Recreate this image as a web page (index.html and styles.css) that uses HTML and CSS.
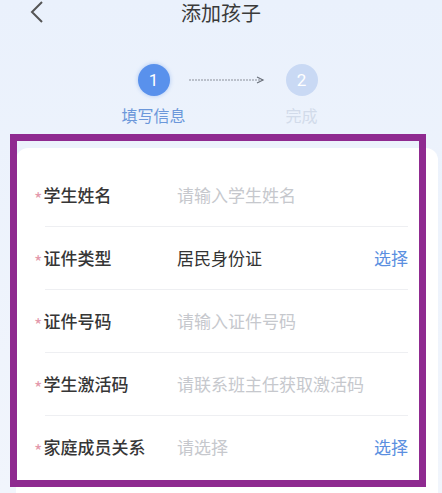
FILE: index.html
```html
<!DOCTYPE html>
<html lang="zh-CN">
<head>
    <meta charset="UTF-8">
    <meta name="viewport" content="width=device-width, initial-scale=1.0">
    <title>添加孩子</title>
    <link rel="stylesheet" href="styles.css">
</head>
<body>
    <div class="header">
        <span class="back">
            <svg width="14" height="22" viewBox="0 0 14 22"><polyline points="12,1 2,11 12,21" fill="none" stroke="#555" stroke-width="2"/></svg>
        </span>
        <span class="title">添加孩子</span>
    </div>

    <div class="steps">
        <div class="step active">
            <div class="dot">1</div>
            <div class="step-label">填写信息</div>
        </div>
        <svg class="arrow" width="76" height="10" viewBox="0 0 76 10">
            <line x1="0" y1="5" x2="74" y2="5" stroke="#8a8f99" stroke-width="1" stroke-dasharray="2,1"/>
            <polyline points="68,2 74,5 68,8" fill="none" stroke="#6b717c" stroke-width="1.2"/>
        </svg>
        <div class="step">
            <div class="dot">2</div>
            <div class="step-label">完成</div>
        </div>
    </div>

    <div class="card">
        <div class="row">
            <span class="label"><i class="star">*</i>学生姓名</span>
            <span class="value placeholder">请输入学生姓名</span>
        </div>
        <div class="row">
            <span class="label"><i class="star">*</i>证件类型</span>
            <span class="value">居民身份证</span>
            <span class="pick">选择</span>
        </div>
        <div class="row">
            <span class="label"><i class="star">*</i>证件号码</span>
            <span class="value placeholder">请输入证件号码</span>
        </div>
        <div class="row">
            <span class="label"><i class="star">*</i>学生激活码</span>
            <span class="value placeholder">请联系班主任获取激活码</span>
        </div>
        <div class="row">
            <span class="label"><i class="star">*</i>家庭成员关系</span>
            <span class="value placeholder">请选择</span>
            <span class="pick">选择</span>
        </div>
    </div>

    <div class="highlight"></div>
</body>
</html>
```

FILE: styles.css
```css
body { margin: 0; height: 493px; overflow: hidden; position: relative; background: linear-gradient(#eaf1fc, #f1f5fc); font-family: "Noto Sans CJK SC", "Noto Sans", sans-serif; color: #333; }

.header { height: 25px; position: relative; display: flex; justify-content: center; align-items: center; }
.header .back { position: absolute; left: 30px; top: 1px; }
.header .title { font-size: 20px; line-height: 24px; padding-top: 1px; color: #3a3a3a; }

.steps { display: flex; justify-content: center; align-items: flex-start; margin-top: 39px; padding-left: 13px; }
.step { width: 32px; display: flex; flex-direction: column; align-items: center; }
.dot { width: 32px; height: 32px; border-radius: 50%; background: #c9d9f4; color: #fff; font-size: 17px; line-height: 32px; text-align: center; font-family: Roboto, sans-serif; }
.step.active .dot { background: #5991ec; box-shadow: 0 0 4px rgba(89, 145, 236, .45); }
.step-label { margin-top: 9px; font-size: 16px; line-height: 20px; color: #d2dbea; white-space: nowrap; }
.step.active .step-label { color: #6b97da; }
.arrow { margin: 11px 21px 0 19px; }

.card { margin: 23px 4px 0 16px; background: #fff; border-radius: 12px; padding-top: 16px; height: 340px; }
.row { height: 62px; margin: 0 30px 0 29px; border-bottom: 1px solid #eeeff2; display: flex; align-items: center; font-size: 17px; line-height: 24px; }
.row:last-child { border-bottom: none; }
.label { width: 132px; display: flex; align-items: center; color: #363636; font-weight: 500; white-space: nowrap; }
.star { font-style: normal; font-weight: 400; color: #e49aac; margin: 7px 1px 0 -11px; font-size: 18px; line-height: 17px; }
.value { flex: 1; color: #333; }
.value.placeholder { color: #c6c8cd; }
.pick { color: #5b8fe0; }

/* annotation frame drawn over the form */
.highlight { position: absolute; left: 10px; top: 134px; width: 402px; height: 339px; border: 7px solid #8f2a90; }
```
